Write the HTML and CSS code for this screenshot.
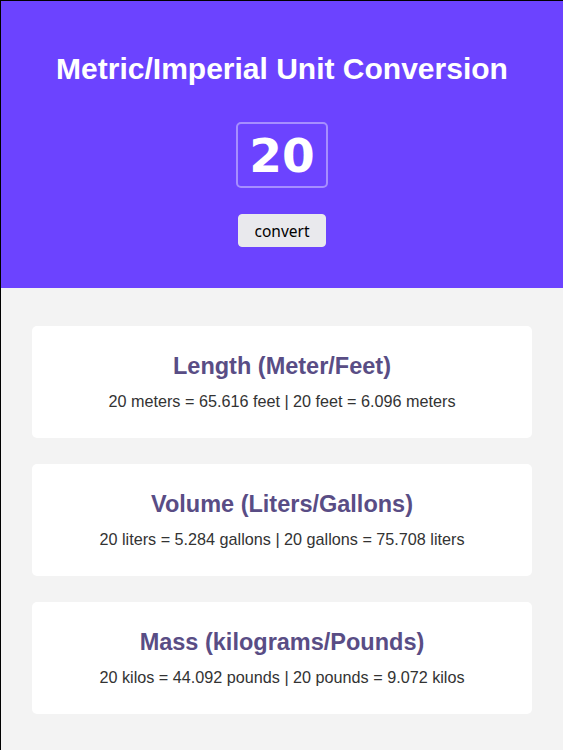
FILE: index.html
```html
<!DOCTYPE html>
<html lang="en">
<head>
<meta charset="utf-8">
<title>Metric/Imperial Unit Conversion</title>
<link rel="stylesheet" href="styles.css">
</head>
<body>
<header class="hero">
  <h1 class="hero-title">Metric/Imperial Unit Conversion</h1>
  <input class="hero-input" type="text" value="20">
  <button class="hero-btn" type="button">convert</button>
</header>
<main class="results">
  <section class="card">
    <h2 class="card-title">Length (Meter/Feet)</h2>
    <p class="card-text">20 meters = 65.616 feet | 20 feet = 6.096 meters</p>
  </section>
  <section class="card">
    <h2 class="card-title">Volume (Liters/Gallons)</h2>
    <p class="card-text">20 liters = 5.284 gallons | 20 gallons = 75.708 liters</p>
  </section>
  <section class="card">
    <h2 class="card-title">Mass (kilograms/Pounds)</h2>
    <p class="card-text">20 kilos = 44.092 pounds | 20 pounds = 9.072 kilos</p>
  </section>
</main>
</body>
</html>
```

FILE: styles.css
```css
* { box-sizing: border-box; }
html, body { height: 100%; }
body {
  margin: 0;
  background: #f3f3f3;
  font-family: "Liberation Sans", Arial, sans-serif;
  border-top: 1px solid #000;
  border-left: 1px solid #000;
}
.hero {
  background: #6c43ff;
  display: flex;
  flex-direction: column;
  align-items: center;
  padding: 49px 0 41px;
}
.hero-title {
  margin: 0;
  color: #fff;
  font-size: 30px;
  line-height: 37px;
  font-weight: bold;
}
.hero-input {
  margin-top: 35px;
  width: 92px;
  height: 66px;
  background: transparent;
  border: 2px solid rgba(255,255,255,0.4);
  border-radius: 5px;
  color: #fff;
  text-align: center;
  font-family: "DejaVu Sans", sans-serif;
  font-weight: bold;
  font-size: 47px;
  padding: 0;
  outline: none;
}
.hero-btn {
  margin-top: 26px;
  width: 88px;
  height: 33px;
  background: #e9e9ed;
  border: 1px solid #e9e9ed;
  border-radius: 4px;
  color: #000;
  font-family: "Noto Sans", sans-serif;
  font-size: 15.5px;
  padding: 0;
}
.results {
  display: flex;
  flex-direction: column;
  gap: 26px;
  padding: 38px 31px 0;
}
.card {
  background: #fff;
  border-radius: 5px;
  padding: 26px 10px 28px;
  text-align: center;
}
.card-title {
  margin: 0;
  font-size: 23.5px;
  line-height: 28px;
  color: #594d85;
  font-weight: bold;
}
.card-text {
  margin: 12px 0 0;
  font-size: 16.2px;
  line-height: 18px;
  color: #333;
}
```
